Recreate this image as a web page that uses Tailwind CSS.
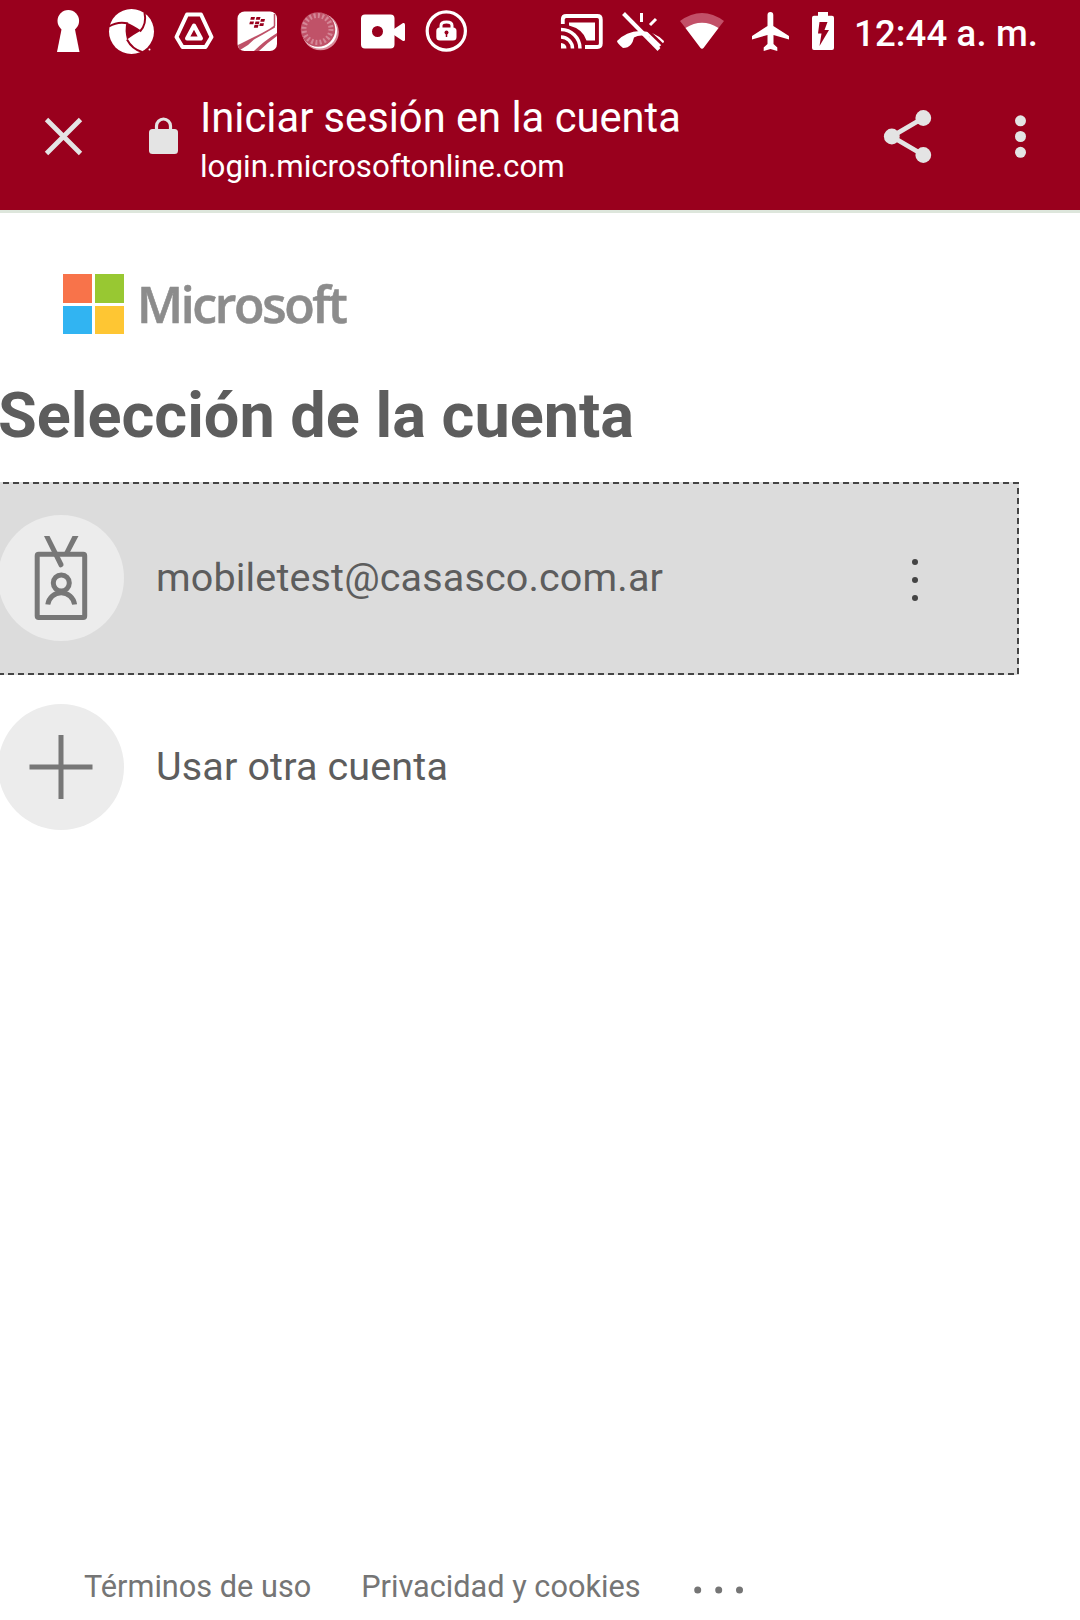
<!DOCTYPE html>
<html lang="es">
<head>
<meta charset="utf-8">
<title>Iniciar sesión en la cuenta</title>
<script src="https://cdn.jsdelivr.net/npm/@tailwindcss/browser@4"></script>
</head>
<body class="w-[1080px] h-[1620px] overflow-hidden bg-white font-['Roboto',sans-serif] flex flex-col">
<header class="bg-[#99001d] h-[210px] shrink-0 text-white">
  <!-- Status bar -->
  <div class="h-[65px] flex items-center pl-[37px] whitespace-nowrap">
    <svg class="w-[63px] h-[65px] shrink-0" viewBox="37 0 63 65" fill="#fff"><circle cx="68.3" cy="20.8" r="10.8"/><path d="M62 27h12.500l5 25h-22.500z"/></svg>
    <svg class="w-[63px] h-[65px] shrink-0" viewBox="100 0 63 65"><circle cx="131.500" cy="31.500" r="22.500" fill="#fff"/><path d="M126.500 22.500Q132 24.500 141 30.500Q133 35 127 39.500Q124.500 30 126.500 22.500z" fill="#99001d"/><path d="M109 26.500Q118 21 128 23.500M144.500 12.500Q147 24 140 31.500M127 39.500Q132 49 142 52" fill="none" stroke="#99001d" stroke-width="2"/><circle cx="149.500" cy="49.500" r="1" fill="#fff"/></svg>
    <svg class="w-[63px] h-[65px] shrink-0" viewBox="163 0 63 65" fill="none" stroke="#fff" stroke-linejoin="round"><path d="M187 14.500h14l10.500 22.500-6 10h-23l-6-10z" stroke-width="4"/><path d="M194 25.500l7 13h-14z" stroke-width="4"/></svg>
    <svg class="w-[63px] h-[65px] shrink-0" viewBox="226 0 63 65"><rect x="237.500" y="11.500" width="39.500" height="39.500" rx="7" fill="#fff"/><path d="M238 45Q252 38 262 33Q270 29 275 25V27.500Q264 34 254 39.500L248 45L240 50Q238 48 238 45zM277 33Q264 41 254 51H259Q267 43 277 36z" fill="#bf5168"/><path d="M274.500 14v12" stroke="#bf5168" stroke-width="1.500"/><g fill="#99001d"><path d="M251 17h4l-.7 2.700h-4zM256.500 17h4l-.7 2.700h-4zM250 21.500h4l-.7 2.700h-4zM255.500 21.500h4l-.7 2.700h-4zM261 19h4l-.7 2.700h-4zM260 23.300h4l-.7 2.700h-4zM254.500 25h4l-.7 2.700h-4z"/></g></svg>
    <svg class="w-[63px] h-[65px] shrink-0" viewBox="289 0 63 65"><circle cx="320.500" cy="32" r="18.300" fill="#d98b9a"/><circle cx="319.500" cy="31" r="17.500" fill="#fff"/><circle cx="318" cy="29.500" r="17.300" fill="#c05268"/><circle cx="317.500" cy="29" r="13.500" fill="none" stroke="#d58797" stroke-width="5" stroke-dasharray="2 2.240"/></svg>
    <svg class="w-[63px] h-[65px] shrink-0" viewBox="352 0 63 65" fill="#fff"><path fill-rule="evenodd" d="M365 14.500h25.500a4 4 0 0 1 4 4v26a4 4 0 0 1-4 4H365a4 4 0 0 1-4-4v-26a4 4 0 0 1 4-4zM377.500 26a5.500 5.500 0 1 0 0 11a5.500 5.500 0 1 0 0-11z"/><path d="M394 29l9-6q2-.5 2 1.500v15q0 2-2 1.500l-9-6z"/></svg>
    <svg class="w-[63px] h-[65px] shrink-0" viewBox="415 0 63 65"><circle cx="446.300" cy="31" r="19.100" fill="none" stroke="#fff" stroke-width="3.200"/><path d="M441 30v-4.500q0-3.500 5.500-3.500t5.500 3.500V30" fill="none" stroke="#fff" stroke-width="3"/><rect x="436.300" y="27.500" width="20.200" height="13" rx="3.500" fill="#fff"/><circle cx="446.500" cy="32.500" r="2" fill="#99001d"/><path d="M446.500 32v5" stroke="#99001d" stroke-width="1.500"/></svg>
    <svg class="w-[60px] h-[65px] shrink-0 ml-[72px]" viewBox="550 0 60 65"><path d="M562.800 24v-4.500q0-3.500 3.500-3.500h31q3.500 0 3.500 3.500v24q0 3.500-3.500 3.500H585" fill="none" stroke="#fff" stroke-width="3.800"/><path d="M569 22.500h26v18h-8.500Q583 29 569 25.500z" fill="#fff"/><path d="M561 43v5.500h5.500a5.500 5.500 0 0 0-5.500-5.500z" fill="#fff"/><path d="M561 37a11.500 11.500 0 0 1 11.500 11.500M561 29.500a19 19 0 0 1 19 19" fill="none" stroke="#fff" stroke-width="3.500"/></svg>
    <svg class="w-[62px] h-[65px] shrink-0" viewBox="610 0 62 65"><path d="M617 41Q626 31.500 640 31L640 31Q655 31.500 664 41Q664.500 42.500 658.500 47.500Q656 47.500 650 42V37Q640 34 634 37.500Q633 42 631 44.500Q628 48 623 48Q617 43 617 41z" fill="#fff"/><path d="M626 9.500L665 47" stroke="#99001d" stroke-width="2.500"/><path d="M623.500 13.500L659 49.500" stroke="#fff" stroke-width="4"/><path d="M641.500 13v9M656 19l-6 6" stroke="#fff" stroke-width="3"/></svg>
    <svg class="w-[68px] h-[65px] shrink-0" viewBox="672 0 68 65"><path d="M680 21Q702 5 724 21L702 49z" fill="#c25068"/><path d="M685.500 28Q702 17.500 718.500 28L703.500 48q-1.500 1.500-3 0z" fill="#fff"/></svg>
    <svg class="w-[60px] h-[65px] shrink-0" viewBox="740 0 60 65"><path d="M767.500 15a2.900 2.900 0 0 1 5.800 0v11L789 36v3.500l-15.500-4.500v9l3.800 3.500v3.500l-6.800-2-6.800 2V47.500l3.800-3.500V35L752 39.500V36l15.500-10z" fill="#fff"/></svg>
    <svg class="w-[46px] h-[65px] shrink-0" viewBox="800 0 46 65"><path d="M818 12h10v3.800h4q2 0 2 2V48q0 2-2 2h-18q-2 0-2-2V17.800q0-2 2-2h4z" fill="#fff"/><path d="M819.500 22h8l-3 8h4.500l-9.500 16 2-12.500h-3.500z" fill="#99001d"/></svg>
    <span class="ml-[8px] mt-[3px] text-[36.500px] font-medium tracking-[0.15px]">12:44 a. m.</span>
  </div>
  <!-- Browser toolbar -->
  <div class="h-[145px] flex">
    <svg class="w-[128px] h-[145px] shrink-0" viewBox="0 65 128 145" stroke="#e4e4e4" stroke-width="4.800"><path d="M46.500 119.500l34 34M80.500 119.500l-34 34"/></svg>
    <svg class="w-[72px] h-[145px] shrink-0" viewBox="128 65 72 145"><rect x="149" y="129" width="29" height="25" rx="3.500" fill="#e4e4e4"/><path d="M156.500 130v-4a7 7 0 0 1 14 0v4" fill="none" stroke="#e4e4e4" stroke-width="3.200"/></svg>
    <div class="w-[640px] flex flex-col whitespace-nowrap pt-[28px]">
      <span class="text-[41.700px] leading-[50px]">Iniciar sesión en la cuenta</span>
      <span class="text-[31.300px] leading-[38px] mt-[5px]">login.microsoftonline.com</span>
    </div>
    <svg class="w-[140px] h-[145px] shrink-0" viewBox="840 65 140 145" fill="#e4e4e4"><path d="M923.300 118l-31.500 18.500 31.500 18.500" fill="none" stroke="#e4e4e4" stroke-width="4.800"/><circle cx="923.300" cy="118" r="7.900"/><circle cx="891.800" cy="136.500" r="7.900"/><circle cx="923.300" cy="155" r="7.900"/></svg>
    <svg class="w-[100px] h-[145px] shrink-0" viewBox="980 65 100 145" fill="#e4e4e4"><circle cx="1020.500" cy="120.800" r="5.500"/><circle cx="1020.500" cy="136.500" r="5.500"/><circle cx="1020.500" cy="152.300" r="5.500"/></svg>
  </div>
</header>
<main class="flex-1 flex flex-col border-t-[3px] border-[#dde6dc] whitespace-nowrap text-[#5d5d5d]">
  <div class="flex h-[61px] mt-[61px] pl-[63px]">
    <div class="grid grid-cols-2 gap-[3px] w-[61px] h-[60px]">
      <i class="bg-[#f8734a]"></i><i class="bg-[#98c832]"></i><i class="bg-[#31b4f2]"></i><i class="bg-[#fec633]"></i>
    </div>
    <span class="ml-[13px] text-[50px] leading-[60px] font-semibold font-['Open_Sans'] text-[#8c8c8c] tracking-[-2.350px] [-webkit-text-stroke:0.6px_#8c8c8c]">Microsoft</span>
  </div>
  <h1 class="mt-[45px] -ml-[2px] h-[72px] text-[63px] leading-[72px] font-bold">Selección de la cuenta</h1>
  <section class="relative mt-[30px] h-[193px] w-[1019px] bg-[#dcdcdc] flex items-center">
    <svg class="absolute inset-0 w-full h-full" viewBox="0 0 1019 193" fill="none" stroke="#444" stroke-width="2"><path d="M3 1H1018V192H0" stroke-dasharray="6 4"/></svg>
    <svg class="w-[124px] h-[193px] shrink-0" viewBox="0 482 124 193"><circle cx="61" cy="578" r="63" fill="#ececec"/><g fill="none" stroke="#777" stroke-width="5"><rect x="37.200" y="554.300" width="47.500" height="63.300" rx="1.500"/><circle cx="61.300" cy="583" r="8"/><path d="M47.800 604.500a13.500 13.500 0 0 1 26.800 0"/></g><path d="M72.500 536h6L69 554h-5.500zM44 536h5.500l14 28q.5 2-1.500 3t-3-.5z" fill="#777"/></svg>
    <span class="ml-[32px] -mt-[2px] text-[39.500px] tracking-[0.150px]">mobiletest@casasco.com.ar</span>
    <svg class="absolute left-[900px] top-0 w-[30px] h-[193px]" viewBox="900 482 30 193" fill="#444"><circle cx="915" cy="562" r="3"/><circle cx="915" cy="580" r="3"/><circle cx="915" cy="598" r="3"/></svg>
  </section>
  <section class="h-[186px] flex items-center">
    <svg class="w-[124px] h-[186px] shrink-0" viewBox="0 675 124 186"><circle cx="61" cy="767" r="63" fill="#ececec"/><path d="M61 735v64M29.500 767h63" stroke="#777" stroke-width="5"/></svg>
    <span class="ml-[32px] -mt-[2px] text-[39.500px] tracking-[0.150px]">Usar otra cuenta</span>
  </section>
  <footer class="mt-auto h-[66px] flex items-center pl-[84px] text-[30.700px] text-[#757575]">
    <span>Términos de uso</span><span class="ml-[50px]">Privacidad y cookies</span>
    <svg class="w-[60px] h-[66px] ml-[49px]" viewBox="690 1554 60 66" fill="#757575"><circle cx="697.700" cy="1590" r="3.500"/><circle cx="718.700" cy="1590" r="3.500"/><circle cx="739.500" cy="1590" r="3.500"/></svg>
  </footer>
</main>
</body>
</html>
